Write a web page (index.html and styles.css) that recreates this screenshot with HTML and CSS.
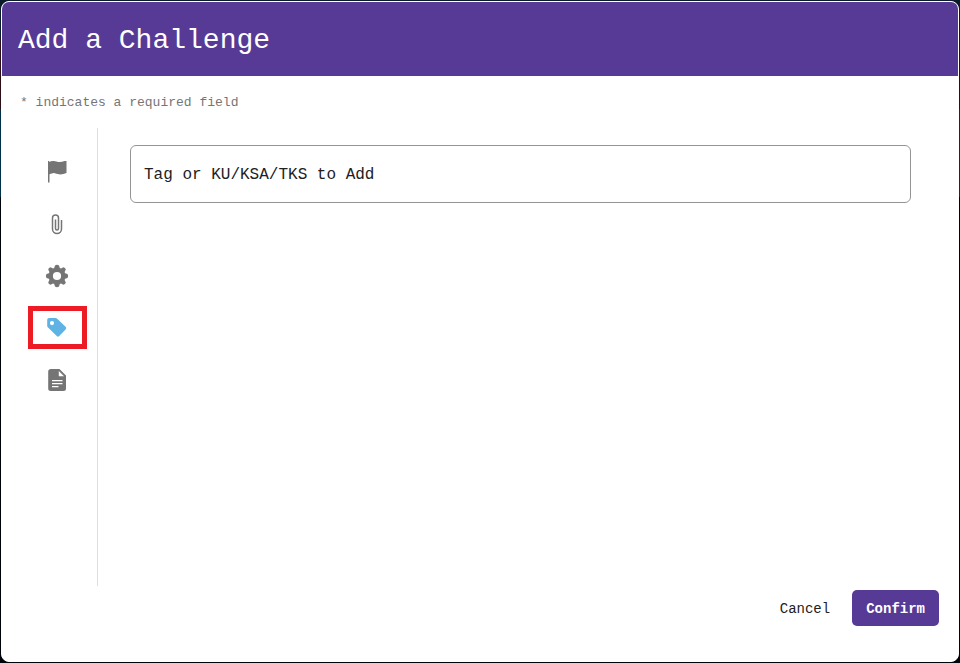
FILE: index.html
```html
<!DOCTYPE html>
<html lang="en">
<head>
<meta charset="utf-8">
<meta name="viewport" content="width=device-width, initial-scale=1">
<title>Add a Challenge</title>
<link rel="stylesheet" href="styles.css">
</head>
<body>
<main class="dialog" role="dialog" aria-labelledby="dialog-title">
  <header class="dialog-header">
    <h1 id="dialog-title">Add a Challenge</h1>
  </header>
  <p class="hint">* indicates a required field</p>
  <div class="dialog-body">
    <nav class="tabs" aria-label="Challenge sections">
      <button class="tab" type="button" aria-label="Overview">
        <svg viewBox="0 0 24 24"><path d="M3 1H4.200V2Q6.500 .7 9 1.100Q11.500 2 14 1.900Q17 2 19.500 1H21.500V13Q17.500 14.700 14 14.300Q11.500 13.500 9 12.900Q6.500 13 4.500 14.300V22.500H3Z"/></svg>
      </button>
      <button class="tab" type="button" aria-label="Attachments">
        <svg viewBox="0 0 24 24"><path class="line" d="M16.500 8V17A4.500 4.500 0 0 1 7.500 17V6A3 3 0 0 1 13.500 6V16.500A1.500 1.500 0 0 1 10.500 16.500V7.500"/></svg>
      </button>
      <button class="tab" type="button" aria-label="Settings">
        <svg viewBox="0 0 24 24"><path fill-rule="evenodd" d="M10 1.500Q12 .2 14 1.500L14.800 3.900L16 4.400L18.400 3.200Q20.400 3.600 20.800 5.600L19.600 8L20.100 9.200L22.500 10Q23.800 12 22.500 14L20.100 14.800L19.600 16L20.800 18.400Q20.400 20.400 18.400 20.800L16 19.600L14.800 20.100L14 22.500Q12 23.800 10 22.500L9.200 20.100L8 19.600L5.600 20.800Q3.600 20.400 3.200 18.400L4.400 16L3.900 14.800L1.500 14Q.2 12 1.500 10L3.900 9.200L4.400 8L3.200 5.600Q3.600 3.600 5.600 3.200L8 4.400L9.200 3.900ZM12 7.900A4.100 4.100 0 1 0 12 16.100A4.100 4.100 0 1 0 12 7.900Z"/></svg>
      </button>
      <button class="tab selected" type="button" aria-label="Tags" aria-current="true">
        <svg viewBox="0 0 24 24"><path fill-rule="evenodd" d="M4 2H10.500Q11.500 2 12.200 2.700L20.800 11.100Q21.800 12.200 20.800 13.300L14 20.300Q13 21.200 12 20.300L3 11.500Q2.200 10.800 2.200 9.800V4Q2.200 2 4 2ZM7 5A2.100 2.100 0 1 0 7 9.200A2.100 2.100 0 1 0 7 5Z"/></svg>
      </button>
      <button class="tab" type="button" aria-label="Documents">
        <svg viewBox="0 0 24 24"><path fill-rule="evenodd" d="M6 1H14.500L21 7.500V20.500Q21 23 18.500 23H5.700Q3.200 23 3.200 20.500V3.500Q3.200 1 6 1ZM13.800 3V8.200H19ZM7 12V13.300H17.500V12ZM7 15V16.300H17.500V15ZM7 18V19.300H13.500V18Z"/></svg>
      </button>
    </nav>
    <section class="panel">
      <input class="tag-input" type="text" placeholder="Tag or KU/KSA/TKS to Add" aria-label="Tag or KU/KSA/TKS to Add">
    </section>
  </div>
  <footer class="actions">
    <button class="button" type="button">Cancel</button>
    <button class="button primary" type="button">Confirm</button>
  </footer>
</main>
</body>
</html>
```
FILE: styles.css
```css
* {
  box-sizing: border-box;
}

body {
  min-height: 100vh;
  margin: 0;
  padding: 1px;
  display: flex;
  font-family: "Liberation Mono", monospace;
  color: #212121;
  background: linear-gradient(to bottom, #0a1c2c 40px, #2c0f16 40px, #2c0f16 109px, #003048 109px, #003048 197px, #00040a 197px);
}

.dialog {
  flex: 1;
  display: flex;
  flex-direction: column;
  border: 1px solid #fff;
  border-radius: 8px;
  overflow: hidden;
  background: #fff;
}

.dialog-header {
  padding: 22px 16px 18px;
  background: #563a96;
  color: #fff;
}

h1 {
  margin: 0;
  font-size: 28px;
  line-height: 34px;
  font-weight: 400;
}

.hint {
  margin: 17px 18px 15px;
  font-size: 13px;
  line-height: 20px;
  color: #757575;
}

.dialog-body {
  flex: 1;
  display: flex;
}

.tabs {
  width: 96px;
  padding: 22px 10px 0 26px;
  border-right: 1px solid #dedede;
  display: flex;
  flex-direction: column;
  gap: 9px;
}

.tab {
  height: 43px;
  padding: 0 2px 0 0;
  border: 0;
  border-radius: 4px;
  background: none;
  color: #757575;
  display: grid;
  place-items: center;
}

.tab svg {
  width: 24px;
  height: 24px;
  fill: currentColor;
}

.tab .line {
  fill: none;
  stroke: currentColor;
  stroke-width: 1.5;
}

.tab.selected {
  border: 5px solid #ed1c24;
  border-radius: 0;
  color: #5eb3e4;
}

.panel {
  flex: 1;
  padding: 17px 47px 0 32px;
}

.tag-input {
  width: 100%;
  height: 58px;
  padding: 2px 13px 0;
  border: 1px solid #949494;
  border-radius: 6px;
  background: #fff;
  font: 16px "Liberation Mono", monospace;
  color: #212121;
}

.tag-input::placeholder {
  color: #212121;
  opacity: 1;
}

.actions {
  padding: 4px 19px 35px;
  display: flex;
  justify-content: flex-end;
  gap: 8px;
}

.button {
  height: 36px;
  padding: 1px 14px 0;
  border: 0;
  border-radius: 5px;
  background: none;
  color: #212121;
  font: 14px "Liberation Mono", monospace;
}

.primary {
  background: #563a96;
  color: #fff;
  font-weight: 700;
}
```
